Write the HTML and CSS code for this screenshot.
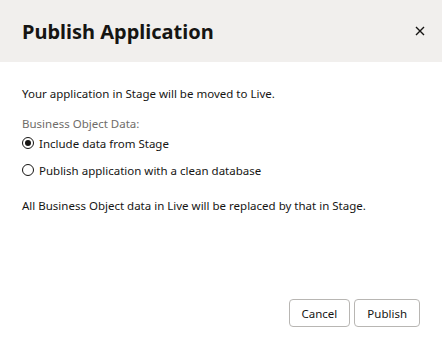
FILE: index.html
```html
<!DOCTYPE html>
<html lang="en">
<head>
  <meta charset="UTF-8" />
  <title>Publish Application</title>
  <link rel="stylesheet" href="styles.css">
</head>
<body>
  <div class="dialog">
    <header>
      <h1>Publish Application</h1>
      <button class="close" aria-label="Close">
        <svg width="10" height="10" viewBox="0 0 10 10"><path d="M1 1L9 9M9 1L1 9" stroke="#161513" stroke-width="1.4" fill="none"/></svg>
      </button>
    </header>
    <div class="body">
      <p class="intro">Your application in Stage will be moved to Live.</p>
      <div class="group">
        <div class="label">Business Object Data:</div>
        <label class="radio"><span class="dot checked"></span>Include data from Stage</label>
        <label class="radio"><span class="dot"></span>Publish application with a clean database</label>
      </div>
      <p class="note">All Business Object data in Live will be replaced by that in Stage.</p>
    </div>
    <footer>
      <button class="btn">Cancel</button>
      <button class="btn">Publish</button>
    </footer>
  </div>
</body>
</html>
```

FILE: styles.css
```css
body {
  margin: 0;
  font-family: "Noto Sans", "Open Sans", sans-serif;
  background: #fff;
  color: #161513;
}
.dialog {
  width: 442px;
  height: 344px;
  display: flex;
  flex-direction: column;
}
header {
  height: 62px;
  background: #f1efed;
  display: flex;
  align-items: center;
  justify-content: space-between;
  padding: 0 14px 0 22px;
  box-sizing: border-box;
}
header h1 {
  margin: 0;
  font-size: 20px;
  font-weight: 700;
}
.close {
  border: none;
  background: none;
  width: 16px;
  height: 16px;
  padding: 0;
  display: flex;
  align-items: center;
  justify-content: center;
}
.body {
  flex: 1;
  padding: 24px 22px 0;
  font-size: 11.5px;
}
.intro {
  margin: 0 0 15px;
}
.label {
  color: #6f6c69;
  margin-bottom: 2px;
}
.radio {
  display: flex;
  align-items: center;
  gap: 5px;
  height: 20px;
  margin-bottom: 7px;
}
.dot {
  width: 10px;
  height: 10px;
  border: 1px solid #161513;
  border-radius: 50%;
  display: flex;
  align-items: center;
  justify-content: center;
}
.dot.checked::after {
  content: "";
  width: 6px;
  height: 6px;
  border-radius: 50%;
  background: #161513;
}
.note {
  margin: 18px 0 0;
}
footer {
  display: flex;
  justify-content: flex-end;
  gap: 4px;
  padding: 0 22px 17px;
}
.btn {
  height: 28px;
  padding: 0 12px;
  border: 1px solid #b8b6b3;
  border-radius: 4px;
  background: #fff;
  font-family: inherit;
  font-size: 11.5px;
  color: #161513;
}
```
